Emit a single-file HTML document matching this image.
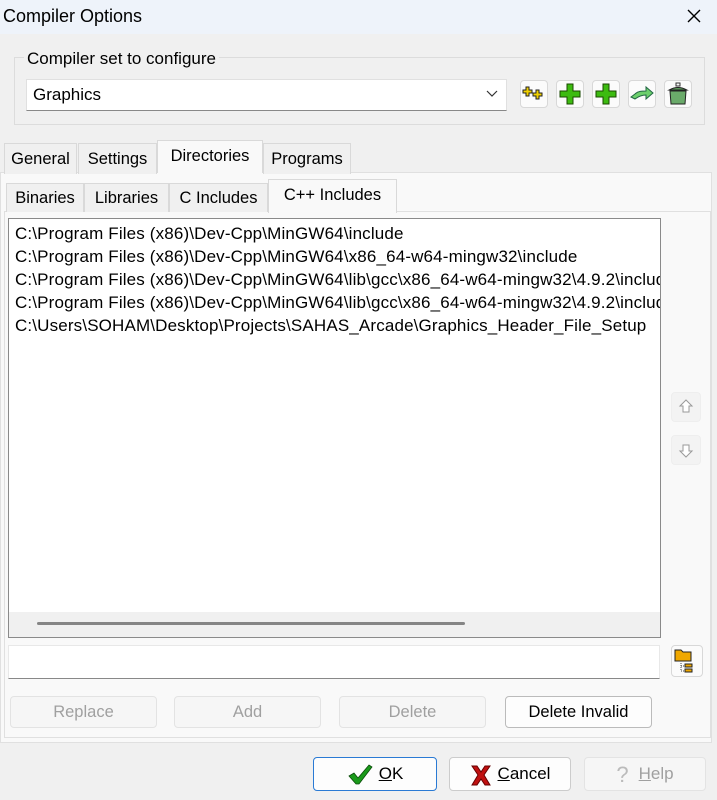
<!DOCTYPE html>
<html><head><style>
*{box-sizing:border-box;margin:0;padding:0}
body{width:717px;height:800px;background:#f0f0f0;font-family:"Liberation Sans",sans-serif;font-size:16px;color:#000;position:relative;overflow:hidden}
.a{position:absolute}
.t{white-space:nowrap}
.btn{position:absolute;border:1px solid #d0d0d0;background:#fdfdfd;border-radius:4px;text-align:center;font-size:16.5px;line-height:30px}
.dis{color:#a0a0a0;border-color:#e3e3e3;background:#f6f6f6}
.ib{position:absolute;width:28px;height:28px;border:1px solid #d8d8d8;border-radius:4px;background:#fbfbfb}
.tab{position:absolute;border:1px solid #d9d9d9;border-bottom:none;background:#f0f0f0;font-size:16.5px;text-align:center;line-height:30px}
</style></head><body>
<div class="a" style="left:0;top:0;width:717px;height:34px;background:#eef3fa"></div>
<div class="a t" style="left:3px;top:6px;font-size:18px">Compiler Options</div>
<svg class="a" style="left:686px;top:8px" width="16" height="16"><path d="M2 2L14 14M14 2L2 14" stroke="#000" stroke-width="1.4"/></svg>

<div class="a" style="left:14px;top:57px;width:691px;height:68px;border:1px solid #dcdcdc"></div>
<div class="a t" style="left:24px;top:49px;background:#f0f0f0;padding:0 3px;font-size:17px">Compiler set to configure</div>
<div class="a" style="left:26px;top:79px;width:481px;height:32px;background:#fff;border:1px solid #e0e0e0;border-bottom-color:#888"></div>
<div class="a t" style="left:33px;top:85px;font-size:17px">Graphics</div>
<svg class="a" style="left:486px;top:89px" width="12" height="10"><path d="M1 2L6 7L11 2" stroke="#333" fill="none" stroke-width="1.2"/></svg>

<div class="ib" style="left:520px;top:80px"><svg width="26" height="26"><g fill="#f0d000" stroke="#222" stroke-width="1"><path d="M5 6h3v3h3v3h-3v3h-3v-3h-3v-3h3z"/><path d="M15 9h3v3h3v3h-3v3h-3v-3h-3v-3h3z"/></g></svg></div>
<div class="ib" style="left:556px;top:80px"><svg width="26" height="26"><path d="M10 3h6v7h7v6h-7v7h-6v-7h-7v-6h7z" fill="#3cbb10" stroke="#1a4a00"/></svg></div>
<div class="ib" style="left:592px;top:80px"><svg width="26" height="26"><path d="M10 3h6v7h7v6h-7v7h-6v-7h-7v-6h7z" fill="#3cbb10" stroke="#1a4a00"/></svg></div>
<div class="ib" style="left:628px;top:80px"><svg width="26" height="26"><path d="M2 16l4-3 c3-3 7-3 11-3v-4l7 6-7 6v-4c-4 0-7 1-11 4z" fill="#6ccf6c" stroke="#264"/></svg></div>
<div class="ib" style="left:664px;top:80px"><svg width="26" height="26"><rect x="11" y="2" width="4" height="3" fill="none" stroke="#333"/><path d="M4 9q9-5 18 0z" fill="#5a9a5a" stroke="#222"/><path d="M5 10h16l-1 13h-14z" fill="#6aaa6a" stroke="#222"/></svg></div>

<div class="a" style="left:0;top:172px;width:712px;height:571px;background:#f9f9f9;border:1px solid #e0e0e0"></div>
<div class="tab" style="left:4px;top:143px;width:73px">General</div>
<div class="tab" style="left:78px;top:143px;width:79px">Settings</div>
<div class="tab" style="left:157px;top:140px;width:106px;height:33px;background:#f9f9f9;line-height:30px">Directories</div>
<div class="tab" style="left:263px;top:143px;width:88px">Programs</div>

<div class="a" style="left:4px;top:211px;width:707px;height:527px;border:1px solid #e0e0e0;background:#f9f9f9"></div>
<div class="tab" style="left:6px;top:183px;width:78px;height:29px;line-height:28px">Binaries</div>
<div class="tab" style="left:84px;top:183px;width:85px;height:29px;line-height:28px">Libraries</div>
<div class="tab" style="left:169px;top:183px;width:99px;height:29px;line-height:28px">C Includes</div>
<div class="tab" style="left:268px;top:179px;width:129px;height:34px;background:#f9f9f9;line-height:30px">C++ Includes</div>

<div class="a" style="left:8px;top:218px;width:653px;height:420px;background:#fff;border:1px solid #8a8a8a;overflow:hidden">
<div class="a t" style="left:6px;top:3px;line-height:23px;font-size:17px;letter-spacing:0.15px">C:\Program Files (x86)\Dev-Cpp\MinGW64\include<br>C:\Program Files (x86)\Dev-Cpp\MinGW64\x86_64-w64-mingw32\include<br>C:\Program Files (x86)\Dev-Cpp\MinGW64\lib\gcc\x86_64-w64-mingw32\4.9.2\include<br>C:\Program Files (x86)\Dev-Cpp\MinGW64\lib\gcc\x86_64-w64-mingw32\4.9.2\include\c++<br>C:\Users\SOHAM\Desktop\Projects\SAHAS_Arcade\Graphics_Header_File_Setup</div>
<div class="a" style="left:0;top:393px;width:651px;height:26px;background:#f0f0f0"></div>
<div class="a" style="left:28px;top:403px;width:428px;height:3px;background:#858585;border-radius:2px"></div>
</div>

<div class="ib" style="left:671px;top:392px;width:30px;height:30px;background:#f3f3f3;border-color:#eee"><svg width="28" height="28"><path d="M14 7l6 6h-3v6h-6v-6h-3z" fill="#fff" stroke="#999"/></svg></div>
<div class="ib" style="left:671px;top:435px;width:30px;height:30px;background:#f3f3f3;border-color:#eee"><svg width="28" height="28"><path d="M14 21l6-6h-3v-6h-6v6h-3z" fill="#fff" stroke="#999"/></svg></div>

<div class="a" style="left:8px;top:645px;width:652px;height:34px;background:#fff;border:1px solid #e8e8e8;border-bottom-color:#888"></div>
<div class="ib" style="left:671px;top:645px;width:32px;height:32px"><svg width="30" height="30"><path d="M3 4h6l2 2h8v9h-16z" fill="#f0a800" stroke="#222"/><path d="M9 17v8M9 20h3M9 25h3" stroke="#444" stroke-dasharray="1 1"/><rect x="13" y="18" width="7" height="3" fill="#f0a800" stroke="#222"/><rect x="13" y="23" width="7" height="3" fill="#f0a800" stroke="#222"/></svg></div>

<div class="btn dis" style="left:10px;top:696px;width:147px;height:32px">Replace</div>
<div class="btn dis" style="left:174px;top:696px;width:147px;height:32px">Add</div>
<div class="btn dis" style="left:339px;top:696px;width:147px;height:32px">Delete</div>
<div class="btn" style="left:505px;top:696px;width:147px;height:32px;border-color:#bbb">Delete Invalid</div>

<div class="btn" style="left:313px;top:757px;width:124px;height:34px;border:1.5px solid #2a7ad4;line-height:32px;font-size:17px"><svg style="vertical-align:middle;margin-right:6px" width="26" height="24"><path d="M2 13l5-3 4 5 11-13 3 2-13 17h-3z" fill="#1a9a1a" stroke="#0a4a0a" stroke-width=".8"/></svg><u>O</u>K</div>
<div class="btn" style="left:449px;top:757px;width:122px;height:34px;line-height:32px;border-color:#ccc;font-size:17px"><svg style="vertical-align:middle;margin-right:6px" width="22" height="24"><path d="M2 3h5l4 6 4-6h5l-6 9 6 10h-5l-4-6-4 6h-5l6-10z" fill="#c01010" stroke="#600"/></svg><u>C</u>ancel</div>
<div class="btn dis" style="left:584px;top:757px;width:122px;height:34px;line-height:32px;font-size:17px"><span style="font-size:22px;color:#bbb;vertical-align:middle;margin-right:10px">?</span><u>H</u>elp</div>
</body></html>
